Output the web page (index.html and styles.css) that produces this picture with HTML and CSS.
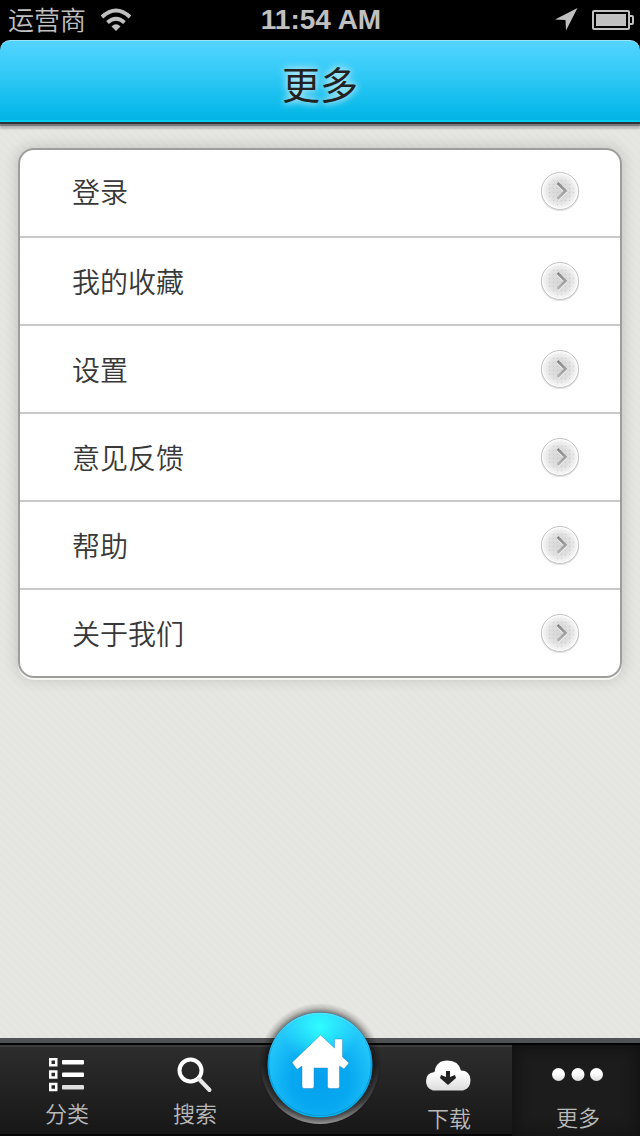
FILE: index.html
```html
<!DOCTYPE html>
<html lang="zh-CN">
<head>
<meta charset="utf-8">
<meta name="viewport" content="width=device-width, initial-scale=1">
<title>更多</title>
<link rel="stylesheet" href="styles.css">
</head>
<body>
<svg class="defs" width="0" height="0" aria-hidden="true">
  <defs>
    <linearGradient id="fade" x1="0" y1="0" x2="0" y2="1">
      <stop offset="0.4" stop-color="#fff"/><stop offset="1" stop-color="#dcdcdc"/>
    </linearGradient>
    <linearGradient id="arrow" x1="0" y1="0" x2="0" y2="1">
      <stop offset="0" stop-color="#858585"/><stop offset="1" stop-color="#b4b4b4"/>
    </linearGradient>
    <radialGradient id="disc">
      <stop offset="0" stop-color="#d6d6d6"/><stop offset="0.6" stop-color="#dfdfdf"/><stop offset="1" stop-color="#f6f6f6"/>
    </radialGradient>
    <pattern id="dots" width="4" height="4" patternUnits="userSpaceOnUse">
      <rect x="1" y="1" width="1" height="1" fill="#cacaca"/>
    </pattern>
    <symbol id="go" viewBox="0 0 40 40">
      <circle cx="20" cy="21" r="18.5" fill="none" stroke="#e4e4e4" stroke-width="1.500"/>
      <circle cx="20" cy="20" r="18.5" fill="#fff" stroke="#c2c2c2"/>
      <circle cx="20" cy="20" r="17" fill="url(#disc)"/>
      <circle cx="20" cy="20" r="14" fill="url(#dots)"/>
      <path d="M17.500 13l8 8-8 8" fill="none" stroke="#f4f4f4" stroke-width="2.500"/>
      <path d="M17.500 12l8 8-8 8" fill="none" stroke="url(#arrow)" stroke-width="2.500"/>
    </symbol>
  </defs>
</svg>
<div class="app">
  <div class="status">
    <div class="status-side">
      <span class="carrier">运营商</span>
      <svg width="32" height="24" viewBox="0 0 32 24" fill="none" stroke="#c0c0c0" stroke-width="4" aria-label="Wi-Fi">
        <path d="M2 9Q16-4 30 9"/><path d="M7.500 14.500Q16 7 24.500 14.500"/>
        <path d="M16 23l-4.500-4.500q4.500-4.500 9 0z" fill="#c0c0c0" stroke="none"/>
      </svg>
    </div>
    <time class="clock">11:54 AM</time>
    <div class="status-side status-end">
      <svg width="24" height="24" viewBox="0 0 24 24" aria-label="定位"><path d="M23.500 0L12 22.500l-.5-10.500L1 11.500z" fill="#c0c0c0"/></svg>
      <svg width="42" height="20" viewBox="0 0 42 20" fill="none" stroke="#c0c0c0" stroke-width="2" aria-label="电量">
        <rect x="1" y="1" width="36" height="18" rx="1"/><rect x="4" y="4" width="30" height="12" fill="#c0c0c0" stroke="none"/><path d="M37 6h3q1 0 1 1v6q0 1-1 1h-3"/>
      </svg>
    </div>
  </div>
  <header class="header"><h1 class="title">更多</h1></header>
  <main class="content">
    <nav class="menu" aria-label="更多">
      <a class="row" href="#login"><span class="label">登录</span><svg class="go"><use href="#go"/></svg></a>
      <a class="row" href="#favorites"><span class="label">我的收藏</span><svg class="go"><use href="#go"/></svg></a>
      <a class="row" href="#settings"><span class="label">设置</span><svg class="go"><use href="#go"/></svg></a>
      <a class="row" href="#feedback"><span class="label">意见反馈</span><svg class="go"><use href="#go"/></svg></a>
      <a class="row" href="#help"><span class="label">帮助</span><svg class="go"><use href="#go"/></svg></a>
      <a class="row" href="#about"><span class="label">关于我们</span><svg class="go"><use href="#go"/></svg></a>
    </nav>
  </main>
  <nav class="tabs" aria-label="主导航">
    <a class="tab" href="#category">
      <svg width="36" height="36" viewBox="0 0 36 36" aria-hidden="true">
        <g fill="none" stroke="#fff" stroke-width="2.500"><rect x="1.250" y="2.250" width="6" height="6"/><rect x="1.250" y="14.500" width="6" height="6"/><rect x="1.250" y="27" width="6" height="6"/></g>
        <rect x="13" y="3" width="22" height="4.500" rx="1" fill="#fff"/><rect x="13" y="15.500" width="22" height="4.500" rx="1" fill="#fff"/><rect x="13" y="28" width="22" height="4.500" rx="1" fill="#ddd"/>
      </svg>
      <span>分类</span>
    </a>
    <a class="tab" href="#search">
      <svg width="36" height="36" viewBox="0 0 36 36" fill="none" stroke="#fff" aria-hidden="true">
        <circle cx="13.500" cy="13.500" r="11" stroke-width="4"/><path d="M22 22l10.500 11" stroke="#e8e8e8" stroke-width="4" stroke-linecap="round"/>
      </svg>
      <span>搜索</span>
    </a>
    <a class="home" href="#home" aria-label="首页">
      <svg width="128" height="136" viewBox="0 0 128 136" aria-hidden="true">
        <defs>
          <radialGradient id="halo" gradientUnits="userSpaceOnUse" cx="64" cy="64" r="62"><stop offset="0.830" stop-color="#000" stop-opacity="0.550"/><stop offset="0.920" stop-color="#000" stop-opacity="0.180"/><stop offset="1" stop-color="#000" stop-opacity="0"/></radialGradient>
          <linearGradient id="cup" x1="0" y1="0" x2="0" y2="1"><stop offset="0.500" stop-color="#555" stop-opacity="0"/><stop offset="0.800" stop-color="#4c4c4c"/><stop offset="1" stop-color="#a8a8a8"/></linearGradient>
          <radialGradient id="blue" gradientUnits="userSpaceOnUse" cx="64" cy="80" r="60"><stop offset="0" stop-color="#05a0ee"/><stop offset="0.500" stop-color="#08a9f1"/><stop offset="1" stop-color="#25c8fa"/></radialGradient>
          <radialGradient id="shine" gradientUnits="userSpaceOnUse" cx="64" cy="26" r="38"><stop offset="0" stop-color="#2ffcff"/><stop offset="1" stop-color="#2ffcff" stop-opacity="0"/></radialGradient>
          <linearGradient id="rim" x1="0" y1="0" x2="0" y2="1"><stop offset="0" stop-color="#55e4ff"/><stop offset="0.500" stop-color="#079ce0"/><stop offset="1" stop-color="#06b8ed"/></linearGradient>
        </defs>
        <circle cx="64" cy="64" r="59" fill="url(#cup)"/>
        <circle cx="64" cy="64" r="62" fill="url(#halo)"/>
        <circle cx="64" cy="64" r="52.500" fill="#087db5"/>
        <circle cx="64" cy="63.500" r="51" fill="url(#blue)"/>
        <circle cx="64" cy="63.500" r="51" fill="url(#shine)"/>
        <circle cx="64" cy="64" r="51.500" fill="none" stroke="url(#rim)" stroke-width="1.500"/>
        <path d="M36 61.500L64.500 34l14 13V39q0-1 1-1h6q1 0 1 1v17l6.500 6-5 6-4.500-3v20.500q0 2-2 2h-8q-2 0-2-2V67H58v18.500q0 2-2 2h-8q-2 0-2-2V65l-5 3.500z" fill="#fff" stroke="#1675b0" stroke-opacity="0.400"/>
      </svg>
    </a>
    <a class="tab tab-low" href="#download">
      <svg width="46" height="32" viewBox="0 0 46 32" aria-hidden="true">
        <path d="M7 30.500Q0 28.500 0 21 0 13 8.500 12 10 .5 21.500 .5q11 0 13.500 10 9 0 9.500 9.500Q44.500 28.500 37 30.500z" fill="url(#fade)"/>
        <path d="M20 11h4v6l5-2 1 3-8 7-8-7 1-3 5 2z" fill="#222"/>
      </svg>
      <span>下载</span>
    </a>
    <a class="tab tab-low tab-active" href="#more" aria-current="page">
      <svg width="52" height="32" viewBox="0 0 52 32" fill="url(#fade)" aria-hidden="true"><circle cx="6.500" cy="15.500" r="6.500"/><circle cx="26" cy="15.500" r="6.500"/><circle cx="44.500" cy="15.500" r="6.500"/></svg>
      <span>更多</span>
    </a>
  </nav>
</div>
</body>
</html>
```

FILE: styles.css
```css
* { box-sizing: border-box; }
body {
  margin: 0;
  background: #000;
  font-family: "Liberation Sans", "Noto Sans CJK SC", sans-serif;
}
a { color: inherit; text-decoration: none; }
svg { display: block; flex: none; }
.defs { position: absolute; }
.app {
  display: flex;
  flex-direction: column;
  min-height: 100vh;
}

.status {
  display: flex;
  align-items: center;
  height: 40px;
  padding: 0 6px 0 8px;
  color: #c0c0c0;
}
.status-side {
  display: flex;
  flex: 1;
  align-items: center;
  gap: 14px;
}
.status-end { justify-content: flex-end; }
.carrier { padding-top: 2px; font-size: 26px; line-height: 38px; font-weight: 350; }
.clock { font-size: 28px; line-height: 40px; font-weight: bold; }

.header {
  position: relative;
  display: flex;
  align-items: center;
  justify-content: center;
  height: 84px;
  padding-top: 8px;
  border-top: 1px solid #9be6fb;
  border-bottom: 2px solid #303436;
  border-radius: 10px 10px 0 0;
  background: linear-gradient(#53d4ff, #37cbf8 35%, #0abaea 85%, #02b2e6);
  box-shadow: inset 0 -2px #00cdf0, 0 2px 1px #777, 0 5px 2px #bbb;
}
.title {
  margin: 0;
  color: #222;
  font-size: 38px;
  line-height: 56px;
  font-weight: 400;
  text-shadow: 0 0 8px #c8f4ff, 0 0 6px #a8dce8;
}

.content {
  flex: 1;
  padding: 24px 18px;
  background: repeating-linear-gradient(45deg, #e6e6e2 0 3px, #e4e4e0 3px 6px);
}
.menu {
  overflow: hidden;
  border: 2px solid #9d9e9b;
  border-radius: 16px;
  background: #fff;
  box-shadow: 0 2px #f6f6f4, 0 0 14px 2px rgba(0, 0, 0, 0.14);
}
.row {
  display: flex;
  align-items: center;
  justify-content: space-between;
  height: 88px;
  padding: 0 40px 0 52px;
  border-bottom: 2px solid #c9c9c9;
  color: #383838;
  font-size: 28px;
  line-height: 40px;
  font-weight: 350;
}
.row:first-child { padding-bottom: 4px; }
.row:last-child { height: 86px; border-bottom: 0; }
.label { padding-top: 6px; }
.go { width: 40px; height: 40px; }

.tabs {
  display: grid;
  grid-template-columns: repeat(5, 1fr);
  height: 98px;
  border-top: 5px solid #505152;
  border-bottom: 2px solid #050505;
  background: linear-gradient(#030303 0 2px, #3d3d3d 2px 4px, #2d2d2d 4px, #171717);
}
.tab {
  display: flex;
  flex-direction: column;
  align-items: center;
  gap: 6px;
  padding: 14px 0 0 6px;
  color: #b9b9b9;
  font-size: 22px;
  line-height: 32px;
  font-weight: 350;
}
.tab-low {
  gap: 12px;
  padding: 17px 0 0 2px;
}
.tab-active {
  margin-top: 2px;
  padding: 14px 0 0 4px;
  background: #1c1c1c;
  box-shadow: inset 0 0 14px 4px #121212;
}
.home {
  position: relative;
  z-index: 1;
  justify-self: center;
  width: 128px;
  height: 88px;
  margin-top: -42px;
}
```
